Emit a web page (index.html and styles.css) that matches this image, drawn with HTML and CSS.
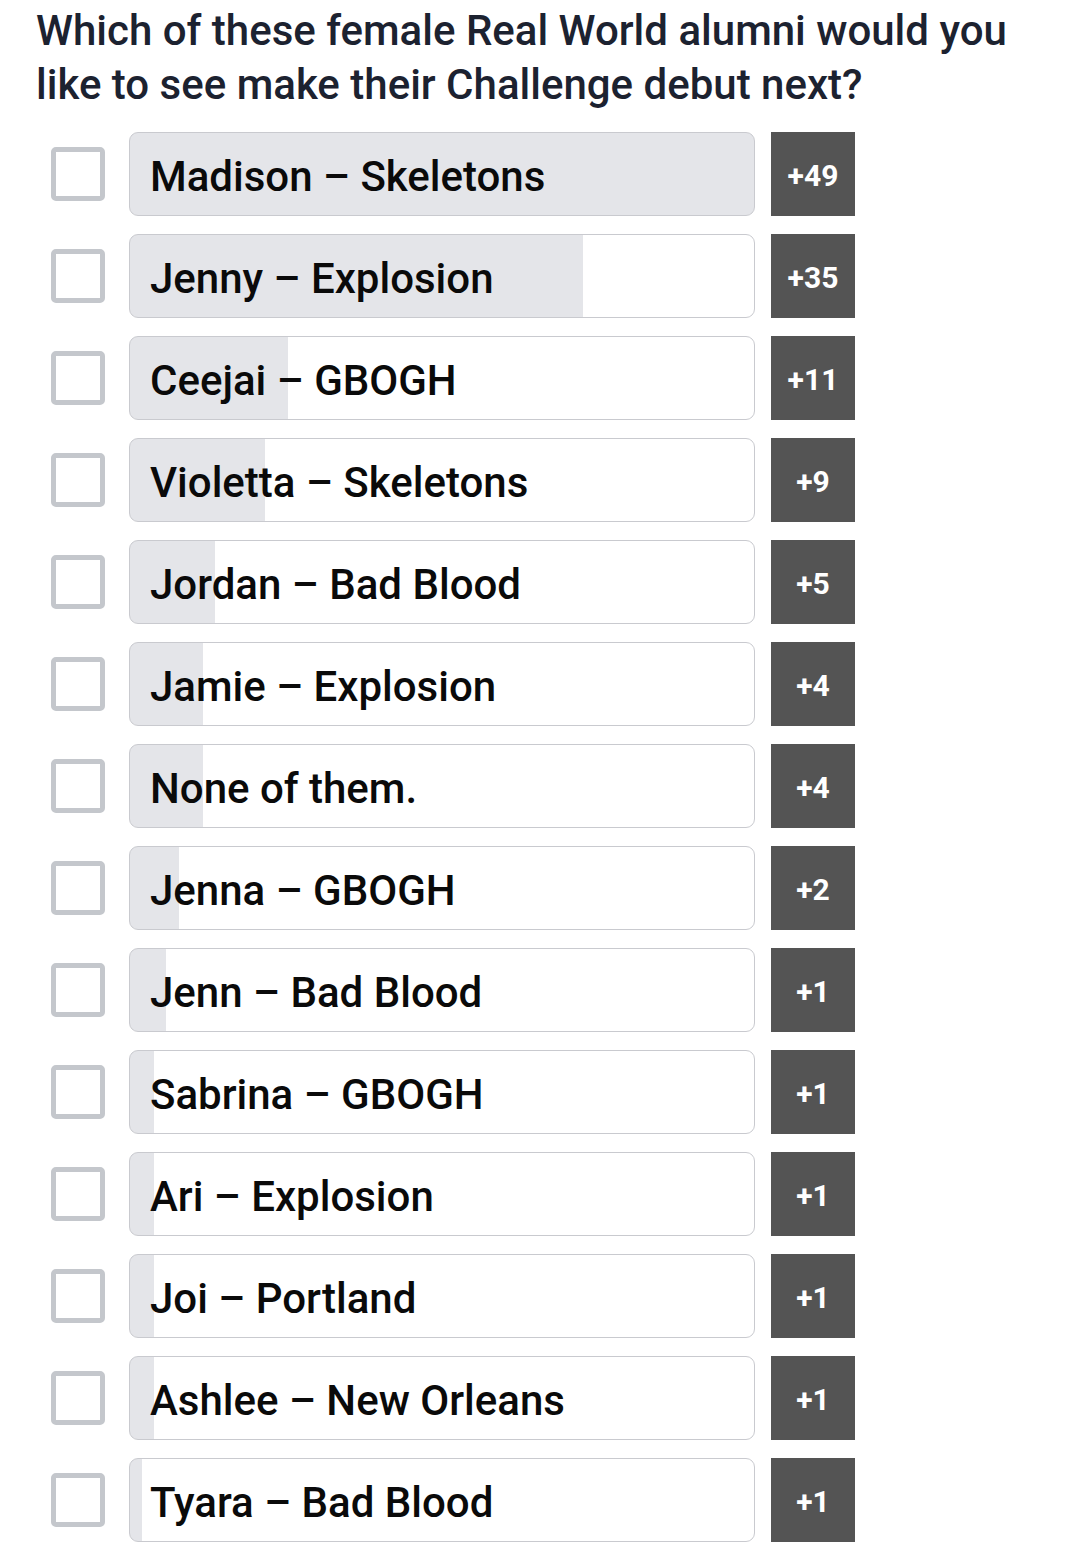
FILE: index.html
```html
<!DOCTYPE html>
<html lang="en">
<head>
<meta charset="utf-8">
<title>Poll</title>
<link rel="stylesheet" href="styles.css">
</head>
<body>
<div class="poll">
  <h1 class="question">Which of these female Real World alumni would you like to see make their Challenge debut next?</h1>
  <ul class="options">
    <li class="option"><span class="check"></span><div class="bar" style="--fill:100%"><span class="label">Madison – Skeletons</span></div><span class="count">+49</span></li>
    <li class="option"><span class="check"></span><div class="bar" style="--fill:72.6%"><span class="label">Jenny – Explosion</span></div><span class="count">+35</span></li>
    <li class="option"><span class="check"></span><div class="bar" style="--fill:25.4%"><span class="label">Ceejai – GBOGH</span></div><span class="count">+11</span></li>
    <li class="option"><span class="check"></span><div class="bar" style="--fill:21.6%"><span class="label">Violetta – Skeletons</span></div><span class="count">+9</span></li>
    <li class="option"><span class="check"></span><div class="bar" style="--fill:13.7%"><span class="label">Jordan – Bad Blood</span></div><span class="count">+5</span></li>
    <li class="option"><span class="check"></span><div class="bar" style="--fill:11.7%"><span class="label">Jamie – Explosion</span></div><span class="count">+4</span></li>
    <li class="option"><span class="check"></span><div class="bar" style="--fill:11.7%"><span class="label">None of them.</span></div><span class="count">+4</span></li>
    <li class="option"><span class="check"></span><div class="bar" style="--fill:7.8%"><span class="label">Jenna – GBOGH</span></div><span class="count">+2</span></li>
    <li class="option"><span class="check"></span><div class="bar" style="--fill:5.8%"><span class="label">Jenn – Bad Blood</span></div><span class="count">+1</span></li>
    <li class="option"><span class="check"></span><div class="bar" style="--fill:3.9%"><span class="label">Sabrina – GBOGH</span></div><span class="count">+1</span></li>
    <li class="option"><span class="check"></span><div class="bar" style="--fill:3.9%"><span class="label">Ari – Explosion</span></div><span class="count">+1</span></li>
    <li class="option"><span class="check"></span><div class="bar" style="--fill:3.9%"><span class="label">Joi – Portland</span></div><span class="count">+1</span></li>
    <li class="option"><span class="check"></span><div class="bar" style="--fill:3.9%"><span class="label">Ashlee – New Orleans</span></div><span class="count">+1</span></li>
    <li class="option"><span class="check"></span><div class="bar" style="--fill:1.9%"><span class="label">Tyara – Bad Blood</span></div><span class="count">+1</span></li>
  </ul>
</div>
</body>
</html>
```
FILE: styles.css
```css
* { box-sizing: border-box; }
html, body { margin: 0; padding: 0; background: #ffffff; }
body { font-family: Roboto, "Liberation Sans", sans-serif; }

.poll { padding: 4px 0 0 36px; }

.question {
  margin: 0;
  max-width: 1000px;
  font-size: 42px;
  line-height: 54px;
  font-weight: 500;
  color: #1c2230;
  letter-spacing: 0;
}

.options {
  list-style: none;
  margin: 20px 0 0 0;
  padding: 0 0 0 15px;
  display: flex;
  flex-direction: column;
  gap: 18px;
}

.option {
  display: flex;
  align-items: center;
  height: 84px;
}

.check {
  width: 54px;
  height: 54px;
  border: 5px solid #c4c7cc;
  border-radius: 5px;
  background: #fff;
  flex: none;
}

.bar {
  margin-left: 24px;
  width: 626px;
  height: 84px;
  border: 1px solid #c9cacf;
  border-radius: 9px;
  background: linear-gradient(to right, #e4e5e9 var(--fill), #ffffff var(--fill));
  display: flex;
  align-items: center;
  padding: 4px 0 0 20px;
  flex: none;
}

.label {
  font-size: 42px;
  font-weight: 500;
  color: #0a0a0a;
}

.count {
  margin-left: 16px;
  width: 84px;
  height: 84px;
  background: #545454;
  color: #ffffff;
  font-size: 30px;
  font-weight: 700;
  display: flex;
  align-items: center;
  justify-content: center;
  padding-top: 2px;
  flex: none;
}
```
